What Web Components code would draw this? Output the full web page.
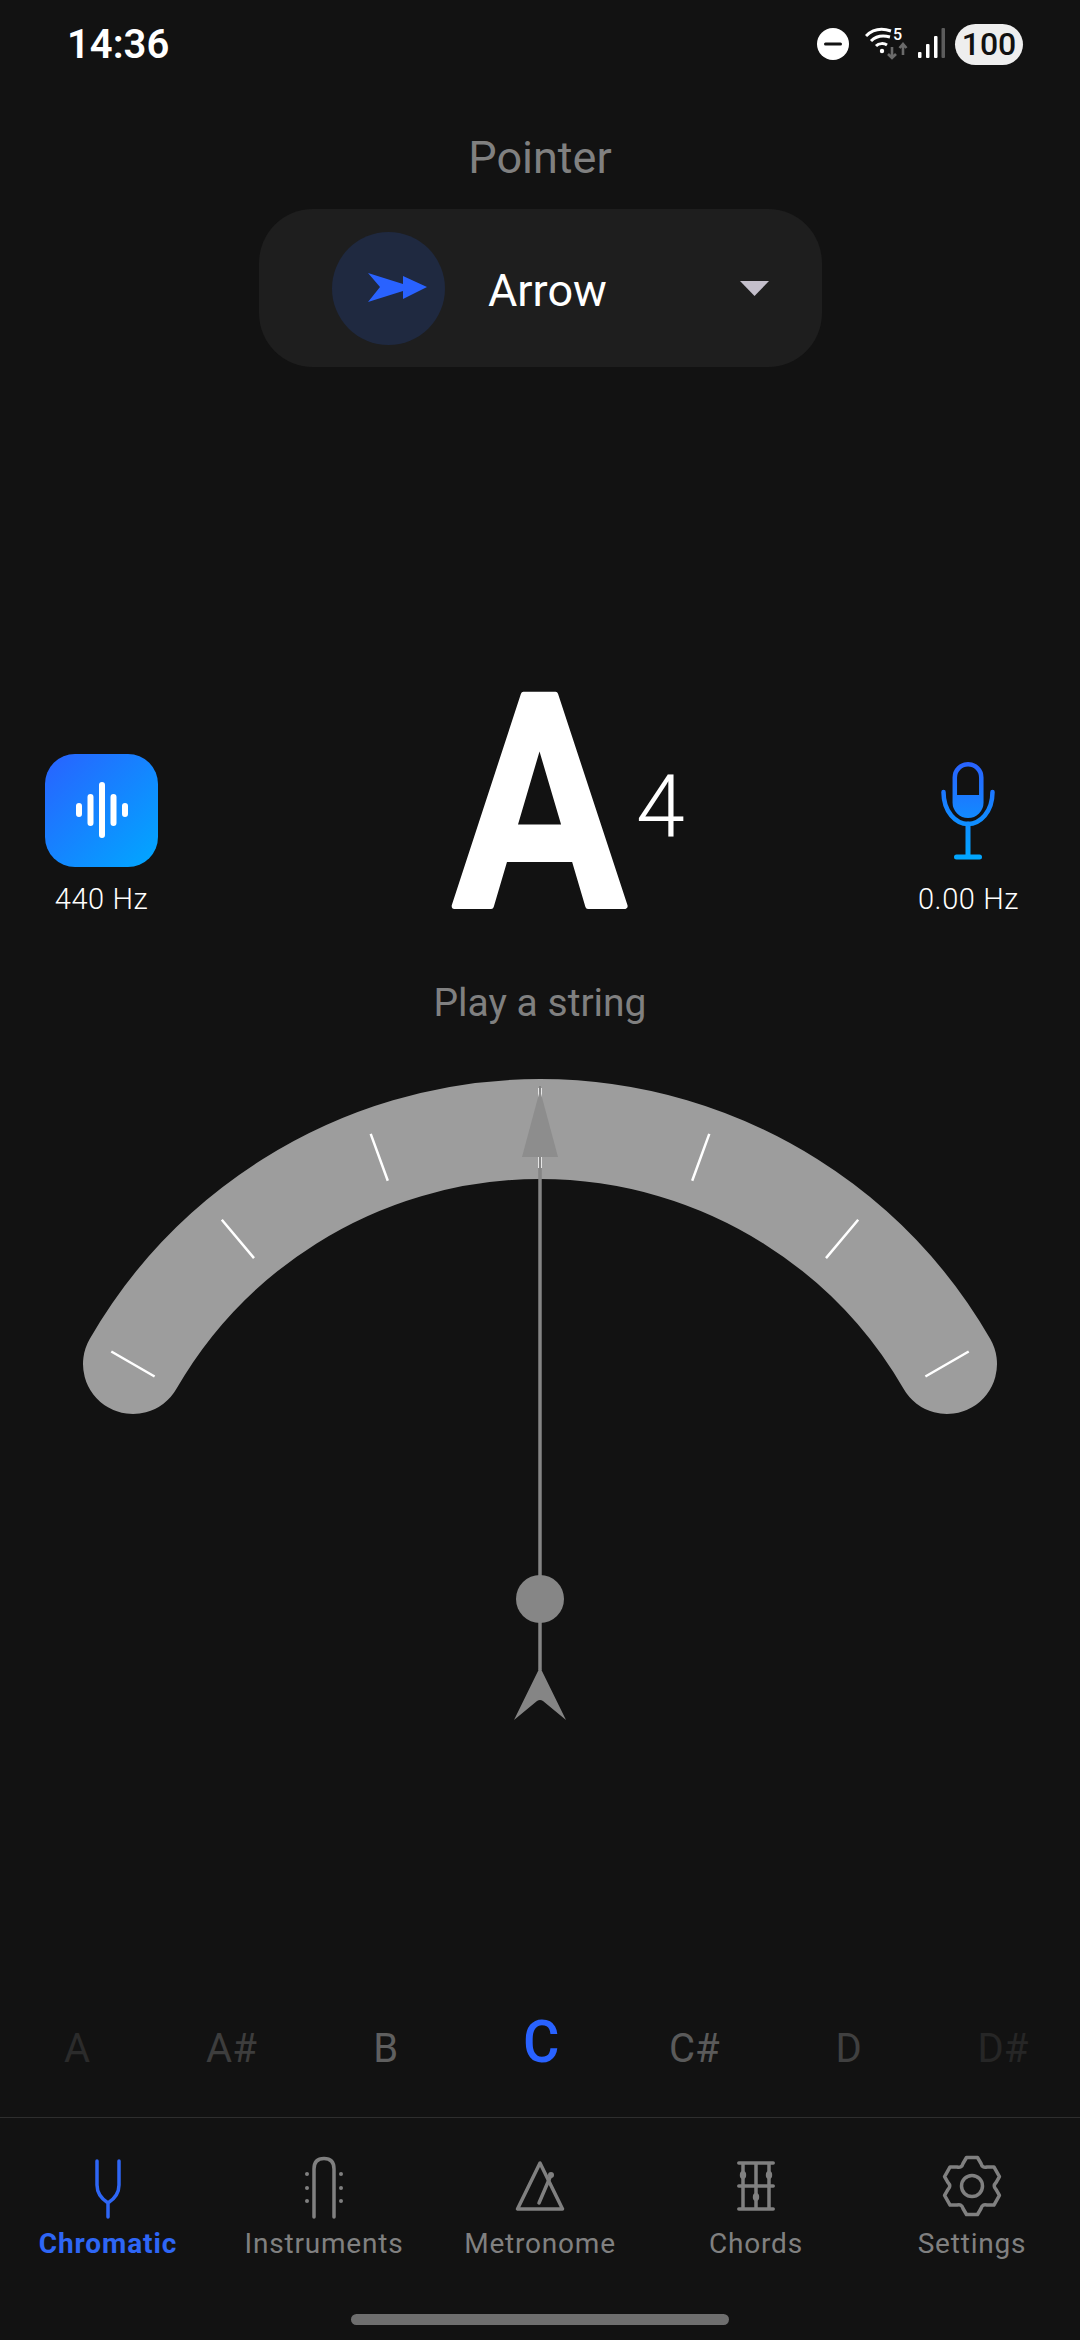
<!DOCTYPE html>
<html lang="en">
<head>
<meta charset="utf-8">
<title>Tuner</title>
<style>
	html, body { margin: 0; padding: 0; background: #121212; }
	body { width: 1080px; height: 2340px; overflow: hidden; font-family: Roboto, "Liberation Sans", sans-serif; }
</style>
</head>
<body>
<status-bar time="14:36" battery="100"></status-bar>
<pointer-select label="Pointer">Arrow</pointer-select>
<note-readout note="A" octave="4" pitch="440 Hz" heard="0.00 Hz"></note-readout>
<tuner-hint>Play a string</tuner-hint>
<tuner-gauge></tuner-gauge>
<note-strip></note-strip>
<nav-bar>
	<nav-item icon="fork" active>Chromatic</nav-item>
	<nav-item icon="headstock">Instruments</nav-item>
	<nav-item icon="metronome">Metronome</nav-item>
	<nav-item icon="chords">Chords</nav-item>
	<nav-item icon="gear">Settings</nav-item>
</nav-bar>
<home-indicator></home-indicator>

<script>
class StatusBar extends HTMLElement {
	constructor(){
		super();
		this.attachShadow({mode: 'open'}).innerHTML = `
		<style>
			:host { display: flex; align-items: center; justify-content: space-between; box-sizing: border-box; height: 88px; padding: 0 57px 0 67px; color: #fff; }
			.time { font-size: 40px; font-weight: 600; line-height: 48px; margin-top: 2px; }
			.icons { display: flex; align-items: center; }
			svg { display: block; }
			.battery { box-sizing: border-box; width: 68px; height: 41px; border-radius: 21px; background: #eeeeee; color: #111; font-size: 32px; font-weight: 500; line-height: 41px; text-align: center; margin-left: 10px; }
			.wifi { margin-left: 16px; }
			.signal { margin-left: 8px; }
		</style>
		<div class="time">${this.getAttribute('time')}</div>
		<div class="icons">
			<svg width="32" height="32" viewBox="0 0 32 32"><circle cx="16" cy="16" r="16" fill="#fff"/><rect x="7" y="14.5" width="18" height="3" rx="1.5" fill="#121212"/></svg>
			<svg class="wifi" width="45" height="46" viewBox="0 -6 45 46" fill="none">
				<g stroke="#fff" stroke-width="3">
					<path d="M1 9 C8 2 17 1 26 4"/>
					<path d="M6 14 C11 9 18 8 25 10"/>
					<path d="M11 19 C14 16 19 16 22 18"/>
				</g>
				<circle cx="17" cy="24" r="2.2" fill="#fff"/>
				<text x="28" y="13" font-family="Roboto" font-size="16" font-weight="500" fill="#fff">5</text>
				<path d="M27 20 V30 M23 27 L27 31 L31 27" stroke="#6a6a6a" stroke-width="2.6"/>
				<path d="M38 28 V18 M34.500 21 L38 17 L41.500 21" stroke="#6a6a6a" stroke-width="2.6"/>
			</svg>
			<svg class="signal" width="27" height="32" viewBox="0 0 27 32">
				<rect x="0" y="24" width="3.500" height="6" rx="1" fill="#fff"/>
				<rect x="8" y="16" width="3.500" height="14" rx="1" fill="#fff"/>
				<rect x="16" y="8" width="3.500" height="22" rx="1" fill="#fff"/>
				<rect x="23.500" y="0" width="3.500" height="30" rx="1" fill="#5c5c5c"/>
			</svg>
			<div class="battery">${this.getAttribute('battery')}</div>
		</div>`;
	}
}

class PointerSelect extends HTMLElement {
	constructor(){
		super();
		this.attachShadow({mode: 'open'}).innerHTML = `
		<style>
			:host { display: block; padding-top: 44px; }
			.label { font-size: 45px; line-height: 52px; color: #808080; text-align: center; }
			.pill { display: flex; align-items: center; box-sizing: border-box; width: 563px; height: 158px; margin: 25px 0 0 259px; padding: 0 53px 0 73px; border-radius: 54px; background: #1e1e1e; }
			.round { display: flex; align-items: center; justify-content: center; width: 113px; height: 113px; border-radius: 50%; background: #1f2940; }
			.round svg { margin-left: 19px; }
			.value { flex: 1; margin: 5px 0 0 43px; font-size: 45px; line-height: 52px; color: #fff; }
			svg { display: block; }
		</style>
		<div class="label">${this.getAttribute('label')}</div>
		<div class="pill">
			<div class="round">
				<svg width="60" height="30" viewBox="0 0 60 30"><path d="M0 0 L12 14 L0 29 L35 18 V26 L59 14 L35 3 V11 Z" fill="#2962ff"/></svg>
			</div>
			<div class="value"><slot></slot></div>
			<svg width="29" height="15" viewBox="0 0 29 15"><path d="M0 0 H29 L14.500 15 Z" fill="#c4bfcb"/></svg>
		</div>`;
	}
}

class NoteReadout extends HTMLElement {
	constructor(){
		super();
		this.attachShadow({mode: 'open'}).innerHTML = `
		<style>
			:host { display: flex; align-items: flex-end; height: 218px; margin-top: 325px; color: #fff; }
			.side { flex: 1; display: flex; align-items: flex-end; }
			.left { justify-content: flex-start; padding-left: 45px; }
			.right { justify-content: space-between; padding-right: 55px; align-self: stretch; }
			.col { display: flex; flex-direction: column; align-items: center; width: 113px; }
			.tile { display: flex; align-items: center; justify-content: center; width: 113px; height: 113px; border-radius: 30px; background: linear-gradient(135deg, #2962ff, #00a8ff); }
			.hz { font-size: 29px; font-weight: 300; line-height: 34px; letter-spacing: 0.6px; margin-top: 15.500px; margin-bottom: -6px; white-space: nowrap; }
			.note { display: block; width: 200px; height: 218px; overflow: visible; }
			.octave { align-self: flex-start; margin-top: 65px; font-size: 88px; font-weight: 300; line-height: 100px; margin-left: 1px; }
			svg { display: block; }
		</style>
		<div class="side left">
			<div class="col">
				<div class="tile">
					<svg width="56" height="56" viewBox="0 0 56 56" fill="none" stroke="#fff" stroke-width="6" stroke-linecap="round">
						<path d="M5 24 V32 M16.500 15 V41 M28 3 V53 M39.500 15 V41 M51 24 V32"/>
					</svg>
				</div>
				<div class="hz">${this.getAttribute('pitch')}</div>
			</div>
		</div>
		<svg class="note" viewBox="0 0 200 218">
			<text transform="translate(104.500 214) scale(.875 1)" text-anchor="middle" font-family="Roboto" font-size="297" font-weight="600" fill="#fff" stroke="#fff" stroke-width="6" stroke-linejoin="round">${this.getAttribute('note')}</text>
		</svg>
		<div class="side right">
			<div class="octave">${this.getAttribute('octave')}</div>
			<div class="col">
				<svg width="113" height="113" viewBox="0 0 113 113" fill="none">
					<defs><linearGradient id="mic" gradientUnits="userSpaceOnUse" x1="0" y1="8" x2="0" y2="106"><stop offset="0" stop-color="#2962ff"/><stop offset="1" stop-color="#00a8ff"/></linearGradient></defs>
					<g stroke="url(#mic)" stroke-linecap="round">
						<rect x="42.800" y="10.300" width="26.500" height="51.500" rx="13.250" stroke-width="4.500"/>
						<path d="M31.500 38 C31.500 58 44 70 56 70 C68 70 80.500 58 80.500 38" stroke-width="4.500"/>
						<path d="M56 70 V103 M44.500 103 H67.500" stroke-width="5"/>
					</g>
					<path d="M42.800 41 H69.300 V49 A13.250 13.250 0 0 1 42.800 49 Z" fill="url(#mic)"/>
				</svg>
				<div class="hz">${this.getAttribute('heard')}</div>
			</div>
		</div>`;
	}
}

class TunerHint extends HTMLElement {
	constructor(){
		super();
		this.attachShadow({mode: 'open'}).innerHTML = `
		<style>
			:host { display: block; margin-top: 68.500px; font-size: 39px; line-height: 48px; color: #808080; text-align: center; }
		</style>
		<slot></slot>`;
	}
}

class TunerGauge extends HTMLElement {
	constructor(){
		super();
		// dial is centred on the pivot, ticks every 20 degrees
		const ticks = [-60, -40, -20, 20, 40, 60].map(a => {
			const r = a * Math.PI / 180;
			const s = Math.sin(r), c = Math.cos(r);
			return `M${(540 + 445 * s).toFixed(1)} ${(1599 - 445 * c).toFixed(1)} L${(540 + 495 * s).toFixed(1)} ${(1599 - 495 * c).toFixed(1)}`;
		}).join(' ');
		this.attachShadow({mode: 'open'}).innerHTML = `
		<style>
			:host { display: block; margin-top: 43.500px; height: 660px; }
			svg { display: block; }
		</style>
		<svg width="1080" height="660" viewBox="0 1070 1080 660" fill="none">
			<path d="M133 1364 A470 470 0 0 1 947 1364" stroke="#9d9d9d" stroke-width="100" stroke-linecap="round"/>
			<path d="${ticks}" stroke="#fff" stroke-width="2.500"/>
			<path d="M540 1088 V1168" stroke="#e6e6e6" stroke-width="4"/>
			<path d="M540 1086 V1168" stroke="#858585" stroke-width="2"/>
			<path d="M540 1168 V1670" stroke="#858585" stroke-width="3.500"/>
			<path d="M540 1090 L558 1157 H522 Z" fill="#8d8d8d"/>
			<circle cx="540" cy="1599" r="24" fill="#868686"/>
			<path d="M540 1667 L566 1720 L543 1701 Q540 1699 537 1701 L514 1720 Z" fill="#858585"/>
		</svg>`;
	}
}

class NoteStrip extends HTMLElement {
	constructor(){
		super();
		const notes = [['A', '#2b2b2b'], ['A#', '#3d3d3d'], ['B', '#5f5f5f'], ['C', '#2962ff'], ['C#', '#5a5a5a'], ['D', '#404040'], ['D#', '#262626']];
		this.attachShadow({mode: 'open'}).innerHTML = `
		<style>
			:host { display: grid; grid-template-columns: repeat(7, 1fr); align-items: baseline; margin-top: 280px; height: 64px; font-size: 40px; line-height: 48px; text-align: center; }
			.on { font-size: 60px; font-weight: 500; line-height: 64px; transform: translateX(1px) scaleX(.93); transform-origin: 50% 100%; }
		</style>
		${notes.map(n => `<div class="${n[0] === 'C' ? 'on' : ''}" style="color:${n[1]}">${n[0]}</div>`).join('')}`;
	}
}

class NavBar extends HTMLElement {
	constructor(){
		super();
		this.attachShadow({mode: 'open'}).innerHTML = `
		<style>
			:host { display: grid; grid-template-columns: repeat(5, 1fr); margin-top: 43px; padding-top: 37px; border-top: 1px solid #2e2e2e; }
		</style>
		<slot></slot>`;
	}
}

function gearPath(cx, cy){
	let d = '';
	for(let i = 0; i < 6; i++){
		const a = i * Math.PI / 3;
		const p = (u, v) => `${(cx + u * Math.cos(a) + v * Math.sin(a)).toFixed(2)} ${(cy + u * Math.sin(a) - v * Math.cos(a)).toFixed(2)}`;
		const m = a + Math.PI / 6;
		d += `${i ? 'Q' + (cx + 20.5 * Math.sin(a - Math.PI / 6)).toFixed(2) + ' ' + (cy - 20.5 * Math.cos(a - Math.PI / 6)).toFixed(2) + ' ' : 'M'}${p(-9, 22.5)} L${p(-5.5, 28.5)} L${p(5.5, 28.5)} L${p(9, 22.5)} `;
		if(i === 5) d += `Q${(cx + 20.5 * Math.sin(m)).toFixed(2)} ${(cy - 20.5 * Math.cos(m)).toFixed(2)} ${(cx - 9).toFixed(2)} ${(cy - 22.5).toFixed(2)} Z`;
	}
	return d;
}

const NAV_ICONS = {
	fork: `<path d="M21 6 V30 Q21 41 32 48 Q43 41 43 30 V6 M32 48 V62"/>`,
	headstock: `<path d="M22 62 V14 Q22 3.500 32 3.500 Q42 3.500 42 14 V62"/>
		<g fill="currentColor" stroke="none"><circle cx="15" cy="19" r="2"/><circle cx="15" cy="33" r="2"/><circle cx="15" cy="46" r="2"/><circle cx="49" cy="19" r="2"/><circle cx="49" cy="33" r="2"/><circle cx="49" cy="46" r="2"/></g>`,
	metronome: `<path d="M32 8 L9.500 54 H54.500 Z"/><path d="M31 48 L43 20"/><circle cx="43" cy="20" r="3" fill="currentColor" stroke="none"/>`,
	chords: `<path d="M14.800 8 H49.200 M14.800 31 H49.200 M14.800 54 H49.200 M19 8 V54 M32 8 V54 M45 8 V54"/>
		<g fill="currentColor" stroke="none"><ellipse cx="19" cy="20" rx="3.200" ry="4"/><ellipse cx="45" cy="20" rx="3.200" ry="4"/><ellipse cx="32" cy="42" rx="3.200" ry="4"/></g>`,
	gear: `<path d="${gearPath(32, 31)}"/><circle cx="32" cy="31" r="10.500"/>`
};

class NavItem extends HTMLElement {
	constructor(){
		super();
		this.attachShadow({mode: 'open'}).innerHTML = `
		<style>
			:host { display: flex; flex-direction: column; align-items: center; color: #808080; font-size: 28px; line-height: 34px; letter-spacing: 0.8px; }
			:host([active]) { color: #2e66f5; font-weight: 700; letter-spacing: 0.9px; }
			svg { display: block; margin-bottom: 8px; }
		</style>
		<svg width="64" height="64" viewBox="0 0 64 64" fill="none" stroke="currentColor" stroke-width="3.500" stroke-linecap="round" stroke-linejoin="round">${NAV_ICONS[this.getAttribute('icon')]}</svg>
		<slot></slot>`;
	}
}

class HomeIndicator extends HTMLElement {
	constructor(){
		super();
		this.attachShadow({mode: 'open'}).innerHTML = `
		<style>
			:host { display: block; width: 378px; height: 11px; margin: 53px 0 0 351px; border-radius: 6px; background: #6e6e6e; }
		</style>`;
	}
}

customElements.define('status-bar', StatusBar);
customElements.define('pointer-select', PointerSelect);
customElements.define('note-readout', NoteReadout);
customElements.define('tuner-hint', TunerHint);
customElements.define('tuner-gauge', TunerGauge);
customElements.define('note-strip', NoteStrip);
customElements.define('nav-bar', NavBar);
customElements.define('nav-item', NavItem);
customElements.define('home-indicator', HomeIndicator);
</script>
</body>
</html>
